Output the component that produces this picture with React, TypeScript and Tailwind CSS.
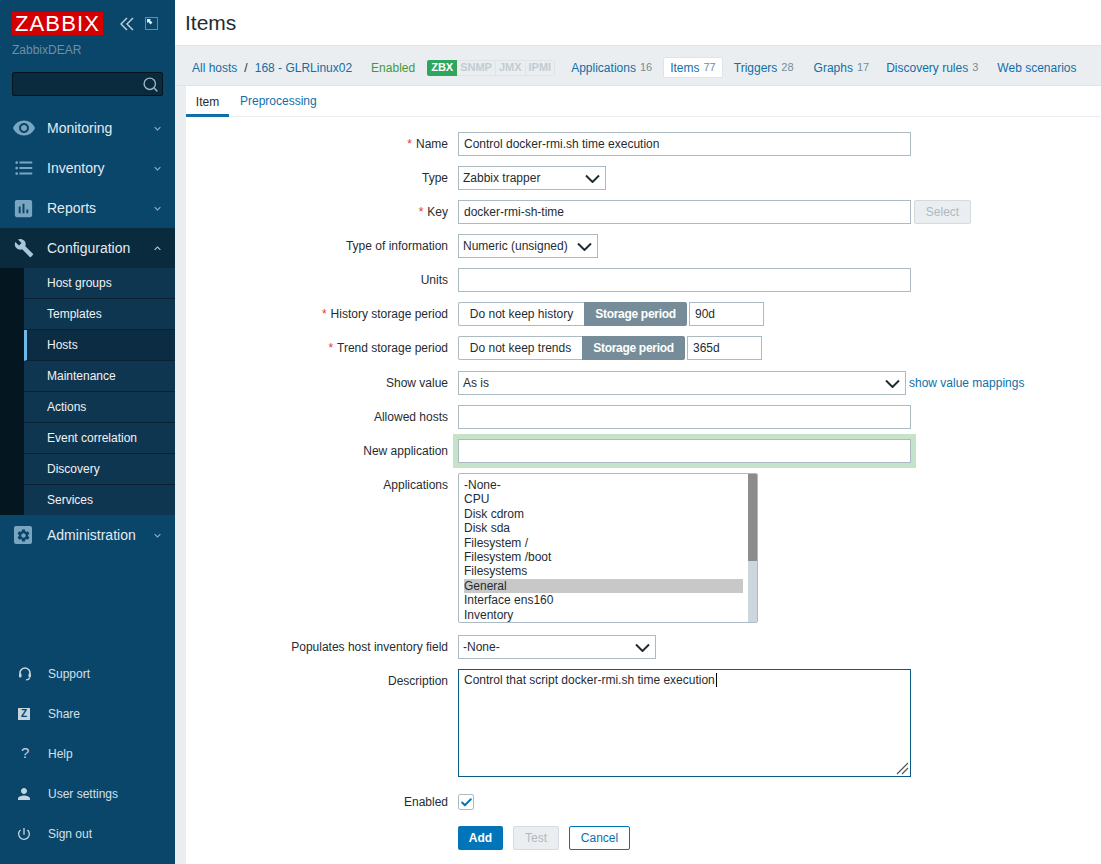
import React from "react";
import { MdVisibility, MdFormatListBulleted, MdAssessment, MdBuild, MdPerson, MdPowerSettingsNew, MdExpandMore, MdExpandLess, MdSettings } from "react-icons/md";
import { Search, Check } from "lucide-react";

const font = "font-['Liberation_Sans',Arial,sans-serif]";

function MenuRow({ icon, label, open }: { icon: React.ReactNode; label: string; open?: boolean }) {
  return (
    <div className={`flex h-10 items-center pl-[14px] pr-[11px] ${open ? "bg-[#0a2a3e]" : ""}`}>
      <span className="flex w-[33px] shrink-0 items-center text-[#7aa5c1]">{icon}</span>
      <span className="flex-1 text-[14px] text-[#e4ebf0]">{label}</span>
      {open ? <MdExpandLess className="text-[13px] text-[#b9cbd8]" /> : <MdExpandMore className="text-[13px] text-[#8fb0c6]" />}
    </div>
  );
}

function SubRow({ label, active }: { label: string; active?: boolean }) {
  return (
    <div className={`flex h-[31px] items-center border-b border-[#0a2233] text-[12px] text-[#f2f2f2] last:h-[30px] last:border-b-0 ${active ? "border-l-[3px] border-l-[#6fb8ea] bg-[#0b2c42] pl-[20px]" : "pl-[23px]"}`}>
      {label}
    </div>
  );
}

function FootRow({ icon, label }: { icon: React.ReactNode; label: string }) {
  return (
    <div className="flex h-10 items-center pl-[18px] text-[12px] text-[#d3e0e9]">
      <span className="flex w-[30px] shrink-0 items-center text-[#c3d5e1]">{icon}</span>
      {label}
    </div>
  );
}

function Sidebar() {
  return (
    <aside className="flex h-[864px] w-[175px] shrink-0 flex-col bg-[#0a466a]">
      <div className="flex items-center pl-[12px] pt-[12px]">
        <div className="flex h-[23px] w-[91px] items-center justify-center bg-[#d40000] text-[22px] leading-none tracking-[1.1px] text-white">ZABBIX</div>
        <svg className="ml-[17px]" width="14" height="14" viewBox="0 0 14 14" fill="none" stroke="#c3d5e1" strokeWidth="1.4">
          <path d="M7 1 1 7l6 6M13 1 7 7l6 6" />
        </svg>
        <svg className="ml-[11px]" width="13" height="13" viewBox="0 0 13 13" fill="none">
          <rect x="0.5" y="0.5" width="12" height="12" stroke="#c3d5e1" strokeWidth="1" strokeDasharray="1 1" />
          <path d="M2 2h4L4.9 3.1 7.4 5.6 5.6 7.4 3.1 4.9 2 6z" fill="#e4ebf0" />
        </svg>
      </div>
      <div className="mt-[8px] pl-[12px] text-[12px] leading-[14px] text-[#6d8fa8]">ZabbixDEAR</div>
      <div className="mx-[12px] mt-[15px] flex h-[24px] items-center justify-end rounded-[2px] border border-[#04131c] bg-[#0a2a3e] pr-[3px]">
        <Search size={17} className="text-[#9fb4c2]" strokeWidth={2} />
      </div>
      <nav className="mt-[12px]">
        <MenuRow label="Monitoring" icon={<MdVisibility size={24} className="-ml-[2px]" />} />
        <MenuRow label="Inventory" icon={<MdFormatListBulleted size={22} className="-ml-[1px]" />} />
        <MenuRow label="Reports" icon={<MdAssessment size={23} className="-ml-[2px]" />} />
        <MenuRow open label="Configuration" icon={<MdBuild size={20} className="text-[#a9c6d9]" />} />
        <div className="flex bg-[#04161f]">
          <div className="w-[24px] shrink-0" />
          <div className="flex-1 bg-[#0f3651]">
            <SubRow label="Host groups" />
            <SubRow label="Templates" />
            <SubRow active label="Hosts" />
            <SubRow label="Maintenance" />
            <SubRow label="Actions" />
            <SubRow label="Event correlation" />
            <SubRow label="Discovery" />
            <SubRow label="Services" />
          </div>
        </div>
        <MenuRow
          label="Administration"
          icon={
            <span className="relative flex h-[18px] w-[18px] items-center justify-center rounded-[2px] bg-[#7aa5c1]">
              <MdSettings size={15} className="text-[#0a466a]" />
            </span>
          }
        />
      </nav>
      <div className="mt-auto pb-[10px]">
        <FootRow
          label="Support"
          icon={
            <svg width="12" height="14" viewBox="0 0 12 14" fill="none" className="ml-px">
              <path d="M1 8V6a5 5 0 0 1 10 0v2" stroke="#c3d5e1" strokeWidth="1.6" />
              <rect x="0" y="6.5" width="2.5" height="4" rx="1" fill="#c3d5e1" />
              <rect x="9.5" y="6.5" width="2.5" height="4" rx="1" fill="#c3d5e1" />
              <path d="M10.5 10.5c0 1.5-1.5 2.3-3.5 2.3" stroke="#c3d5e1" strokeWidth="1.2" />
            </svg>
          }
        />
        <FootRow
          label="Share"
          icon={<span className="flex h-[12px] w-[12px] items-center justify-center bg-[#c3d5e1] text-[10px] font-bold leading-none text-[#0a466a]">Z</span>}
        />
        <FootRow label="Help" icon={<span className="-mt-[3px] pl-[3px] text-[15px] leading-none text-[#c3d5e1]">?</span>} />
        <FootRow label="User settings" icon={<MdPerson size={18} className="-ml-[3px]" />} />
        <FootRow label="Sign out" icon={<MdPowerSettingsNew size={16} className="-ml-[2px]" />} />
      </div>
    </aside>
  );
}

function Badge({ children, on, last }: { children: string; on?: boolean; last?: boolean }) {
  return (
    <span className={`flex h-[16px] items-center px-[3px] text-[11px] font-bold ${on ? "rounded-l-[2px] bg-[#2fa65f] px-[4px] text-white" : `border-y border-r border-[#dfe4e7] bg-[#ebeef0] text-[#c2ccd2] ${last ? "rounded-r-[2px]" : ""}`}`}>
      {children}
    </span>
  );
}

function NavLink({ label, count, active, className = "" }: { label: string; count?: string; active?: boolean; className?: string }) {
  return (
    <span className={`flex h-[21px] items-center whitespace-nowrap rounded-[2px] ${active ? "border border-[#dfe4e7] bg-white px-[6px]" : ""} ${className}`}>
      <a className="text-[#0f6fa8]">{label}</a>
      {count && <span className="ml-[4px] text-[11px] text-[#768d99]">{count}</span>}
    </span>
  );
}

function NavBar() {
  return (
    <div className="flex h-[40px] items-center border-b border-[#dfe4e7] bg-[#ebeef0] pl-[17px] pt-[4px] text-[12px]">
      <a className="text-[#0f6fa8]">All hosts</a>
      <span className="ml-[7px] text-[#1f2c33]">/</span>
      <a className="ml-[7px] text-[#0f6fa8]">168 - GLRLinux02</a>
      <span className="ml-[19px] text-[#3f9a3f]">Enabled</span>
      <span className="ml-[12px] flex">
        <Badge on>ZBX</Badge>
        <Badge>SNMP</Badge>
        <Badge>JMX</Badge>
        <Badge last>IPMI</Badge>
      </span>
      <NavLink className="ml-[16px]" label="Applications" count="16" />
      <NavLink className="ml-[11px]" active label="Items" count="77" />
      <NavLink className="ml-[11px]" label="Triggers" count="28" />
      <NavLink className="ml-[20px]" label="Graphs" count="17" />
      <NavLink className="ml-[17px]" label="Discovery rules" count="3" />
      <NavLink className="ml-[19px]" label="Web scenarios" />
    </div>
  );
}

function Row({ label, required, top, children, className = "" }: { label: string; required?: boolean; top?: boolean; children: React.ReactNode; className?: string }) {
  return (
    <div className={`flex ${top ? "items-start" : "items-center"} ${className}`}>
      <label className={`w-[262px] shrink-0 text-right text-[12px] text-[#1f2c33] ${top ? "pt-[3px]" : ""}`}>
        {required && <span className="mr-[4px] text-[#e33734]">*</span>}
        {label}
      </label>
      <div className="ml-[10px] flex items-center">{children}</div>
    </div>
  );
}

function TextInput({ value = "", className = "w-[453px]" }: { value?: string; className?: string }) {
  return (
    <input
      readOnly
      value={value}
      className={`h-[24px] rounded-none border border-[#acbbc2] bg-white px-[5px] text-[12px] text-[#1f2c33] outline-none ${className}`}
    />
  );
}

function Select({ value, className }: { value: string; className: string }) {
  return (
    <div className={`flex h-[24px] items-center justify-between border border-[#acbbc2] bg-white pl-[4px] pr-[5px] text-[12px] text-[#1f2c33] ${className}`}>
      <span>{value}</span>
      <svg width="15" height="9" viewBox="0 0 15 9" fill="none" stroke="#1f2c33" strokeWidth="2">
        <path d="M1 1.5 7.5 8 14 1.5" />
      </svg>
    </div>
  );
}

function Segments({ off, offW }: { off: string; offW: string }) {
  return (
    <div className="flex h-[24px] text-[12px]">
      <span className={`flex items-center justify-center rounded-l-[2px] border border-r-0 border-[#acbbc2] bg-white text-[#1f2c33] ${offW}`}>{off}</span>
      <span className="flex w-[103px] items-center justify-center rounded-r-[2px] bg-[#768d99] font-bold tracking-[-0.3px] text-white">Storage period</span>
    </div>
  );
}

const apps = ["-None-", "CPU", "Disk cdrom", "Disk sda", "Filesystem /", "Filesystem /boot", "Filesystems", "General", "Interface ens160", "Inventory"];

function AppList() {
  return (
    <div className="flex h-[150px] w-[300px] overflow-hidden rounded-[2px] border border-[#acbbc2] bg-white">
      <div className="flex-1 pl-[5px] pr-[5px] pt-[4px] text-[12px] leading-[14.4px] text-[#1f2c33]">
        {apps.map((a) => (
          <div key={a} className={a === "General" ? "bg-[#c8c8c8]" : ""}>{a}</div>
        ))}
      </div>
      <div className="w-[9px] shrink-0 bg-[#ccd6dd]">
        <div className="h-[87px] bg-[#8c8c8c]" />
      </div>
    </div>
  );
}

function Form() {
  return (
    <div className="flex flex-col gap-[10px] pt-[15px]">
      <Row required label="Name"><TextInput value="Control docker-rmi.sh time execution" /></Row>
      <Row label="Type"><Select value="Zabbix trapper" className="w-[148px]" /></Row>
      <Row required label="Key">
        <TextInput value="docker-rmi-sh-time" />
        <button className="ml-[3px] h-[24px] w-[57px] rounded-[2px] border border-[#d5dadd] bg-[#ebeef0] text-[12px] text-[#acbbc2]">Select</button>
      </Row>
      <Row label="Type of information"><Select value="Numeric (unsigned)" className="w-[140px]" /></Row>
      <Row label="Units"><TextInput /></Row>
      <Row required label="History storage period">
        <Segments off="Do not keep history" offW="w-[126px]" />
        <TextInput value="90d" className="ml-[2px] w-[75px]" />
      </Row>
      <Row required label="Trend storage period" className="mb-px">
        <Segments off="Do not keep trends" offW="w-[124px]" />
        <TextInput value="365d" className="ml-[2px] w-[75px]" />
      </Row>
      <Row label="Show value">
        <Select value="As is" className="w-[448px]" />
        <a className="ml-[3px] text-[12px] text-[#0f6fa8]">show value mappings</a>
      </Row>
      <Row label="Allowed hosts"><TextInput /></Row>
      <Row label="New application">
        <input readOnly className="h-[24px] w-[453px] rounded-none border border-[#acbbc2] bg-white outline-none ring-[5px] ring-[#c5e3c9]" />
      </Row>
      <Row top label="Applications"><AppList /></Row>
      <Row label="Populates host inventory field" className="mt-[2px]"><Select value="-None-" className="w-[198px]" /></Row>
      <Row top label="Description">
        <div className="relative h-[108px] w-[453px] border border-[#0a5a86] bg-white px-[5px] pt-[3px] text-[12px] leading-[14px] text-[#1f2c33]">
          Control that script docker-rmi.sh time execution<span className="ml-px inline-block h-[14px] w-px bg-black align-top" />
          <svg className="absolute bottom-px right-px" width="13" height="13" viewBox="0 0 13 13" fill="none">
            <path d="M1 12 12 1M6 12 12 6" stroke="#555" strokeWidth="1.2" />
          </svg>
        </div>
      </Row>
      <div className="flex h-[29px] items-start pt-[7px]">
        <label className="w-[262px] shrink-0 text-right text-[12px] leading-[16px] text-[#1f2c33]">Enabled</label>
        <span className="ml-[10px] flex h-[16px] w-[16px] items-center justify-center rounded-[2px] border border-[#acbbc2] bg-white">
          <Check size={13} strokeWidth={3.5} className="text-[#0275b8]" />
        </span>
      </div>
      <div className="flex pl-[272px] text-[12px]">
        <button className="h-[24px] w-[45px] rounded-[2px] bg-[#0275b8] font-bold text-white">Add</button>
        <button className="ml-[10px] h-[24px] w-[46px] rounded-[2px] border border-[#d5dadd] bg-[#ebeef0] text-[#acbbc2]">Test</button>
        <button className="ml-[10px] h-[24px] w-[61px] rounded-[2px] border border-[#0275b8] bg-white text-[#0f6fa8]">Cancel</button>
      </div>
    </div>
  );
}

export default function App() {
  return (
    <div className={`flex h-[864px] overflow-hidden bg-[#ebeef0] ${font}`}>
      <Sidebar />
      <main className="flex min-w-0 flex-1 flex-col">
        <header className="flex h-[46px] shrink-0 items-center border-b border-[#dfe4e7] bg-white pl-[10px] text-[21px] text-[#1f2c33]">Items</header>
        <NavBar />
        <div className="ml-[11px] flex-1 bg-white">
          <div className="flex h-[31px] border-b border-[#ebeef0] text-[12px]">
            <span className="flex h-[31px] w-[43px] items-center justify-center border-b-[3px] border-[#0f6fa8] pt-[3px] text-[#1f2c33]">Item</span>
            <a className="flex items-center pl-[11px] text-[#0f6fa8]">Preprocessing</a>
          </div>
          <Form />
        </div>
      </main>
    </div>
  );
}
